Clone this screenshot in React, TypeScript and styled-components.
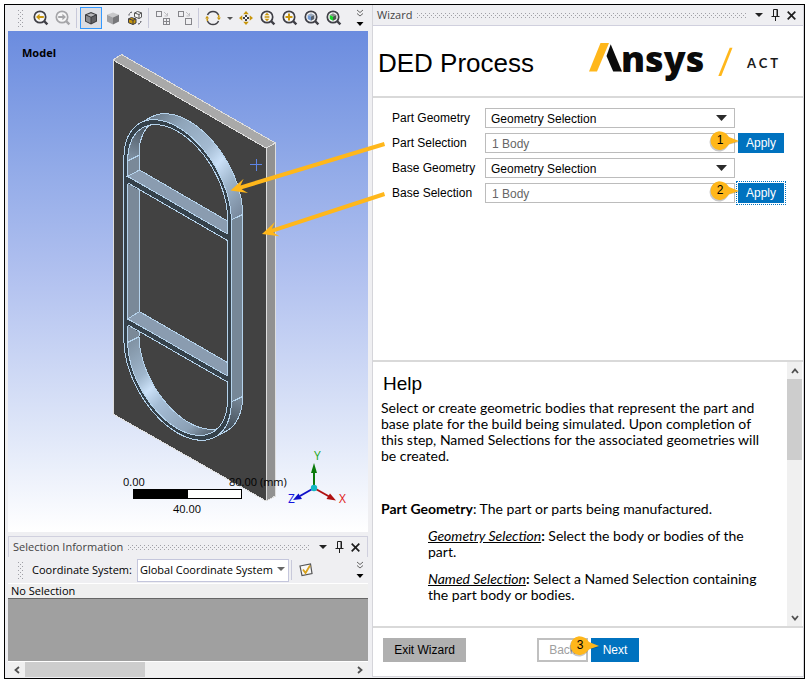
import React from 'react';
import styled, { createGlobalStyle } from 'styled-components';

const GlobalStyle = createGlobalStyle`
  *, *::before, *::after { box-sizing: border-box; }
  body { margin: 0; background: #fff; font: 11px/16px "Open Sans", "Noto Sans", sans-serif; color: #000; }
  h1, h2, p { margin: 0; font-weight: 400; }
  button, select, input { font: inherit; color: inherit; margin: 0; border-radius: 0; }
  svg { display: block; flex: none; }
`;

const ARIAL = '"Liberation Sans", Arial, sans-serif';
const GOLD = '#ffb71b';

/* ---------- shell ---------- */

const Page = styled.div`
  min-height: 100vh;
  display: flex;
  padding: 4px 3px 5px 4px;
`;

const Frame = styled.main`
  flex: 1;
  min-width: 0;
  display: grid;
  grid-template-columns: minmax(0, 360fr) minmax(0, 432fr);
  gap: 4px;
  padding: 0 0 1px 3px;
  border: 1px solid #000;
  background: #efeff2;
`;

const Column = styled.section`
  min-width: 0;
  display: flex;
  flex-direction: column;
`;

const WizardColumn = styled(Column)`
  border: 1px solid #d5d5da;
  border-top: 0;
  background: #fff;
`;

/* ---------- toolbar ---------- */

const Toolbar = styled.div`
  display: flex;
  align-items: center;
  height: 26px;
`;

const ToolButton = styled.button<{ $active?: boolean; $narrow?: boolean }>`
  width: ${p => (p.$narrow ? 11 : 22)}px;
  height: 22px;
  padding: 0;
  display: flex;
  align-items: center;
  justify-content: center;
  border: 1px solid ${p => (p.$active ? '#3399ff' : 'transparent')};
  background: ${p => (p.$active ? '#dcdde2' : 'transparent')};
`;

const Divider = styled.span`
  width: 1px;
  height: 20px;
  margin: 0 3px 0 2px;
  background: #c8c9da;
`;

const dots = (color: string) => `
  background-image:
    conic-gradient(at 1px 1px, transparent 75%, ${color} 0),
    conic-gradient(at 1px 1px, transparent 75%, ${color} 0);
  background-size: 4px 4px;
  background-position: 0 0, 2px 2px;
`;

const Grip = styled.span`
  width: 5px;
  height: 17px;
  margin: 0 7px 0 10px;
  ${dots('#a0a0a6')}
`;

const Spacer = styled.span`
  flex: 1;
`;

const OverflowButton = styled(ToolButton)`
  width: 17px;
`;

/* ---------- panel header ---------- */

const HeaderBar = styled.header`
  display: flex;
  align-items: center;
  height: 21px;
  padding: 0 4px;
  gap: 5px;
  border: 1px solid #d0d0de;
  border-width: 0 0 1px;
  background: #efeff2;
  color: #444;
`;

const SelectionHeader = styled(HeaderBar)`
  border-width: 1px 1px 0;
`;

const HeaderTitle = styled.h2`
  font-size: 11px;
  line-height: 18px;
  white-space: nowrap;
`;

const HeaderDots = styled.span`
  flex: 1;
  height: 5px;
  ${dots('#a0a0a6')}
`;

const HeaderActions = styled.span`
  display: flex;
`;

const HeaderButton = styled.button`
  width: 16px;
  height: 16px;
  padding: 0;
  border: 0;
  background: none;
  display: flex;
  align-items: center;
  justify-content: center;
`;

/* ---------- viewport ---------- */

const Viewport = styled.div`
  position: relative;
  z-index: 1;
  flex: 1;
  min-height: 501px;
  background: linear-gradient(#6b8cdf, #8da7e7 24%, #b0c0ef 48%, #e2e9f9 82%, #fff);
`;

/* ---------- selection panel ---------- */

const SelectionPanel = styled.section`
  margin-top: 4px;
  display: flex;
  flex-direction: column;
`;

const CoordBar = styled(Toolbar)`
  height: 27px;
  border-bottom: 1px solid #fff;
`;

const CoordLabel = styled.label`
  padding: 0 5px 0 2px;
  white-space: nowrap;
`;

const SelectBox = styled.span<{ $coord?: boolean }>`
  position: relative;
  display: block;
  min-width: 0;
  width: ${p => (p.$coord ? '152px' : 'auto')};
  height: ${p => (p.$coord ? 23 : 20)}px;
  & > select {
    appearance: none;
    width: 100%;
    height: 100%;
    padding: ${p => (p.$coord ? '0 14px 0 2px' : '0 20px 0 5px')};
    border: 1px solid ${p => (p.$coord ? '#c4c6dc' : '#bcbcbc')};
    background: #fff;
    outline: 0;
  }
  & > svg {
    position: absolute;
    right: ${p => (p.$coord ? 4 : 8)}px;
    top: 50%;
    margin-top: -3px;
    pointer-events: none;
  }
`;

const SelectionStatus = styled.p`
  padding-left: 3px;
  line-height: 14px;
  border-bottom: 1px solid #666;
  background: #efefef;
`;

const SelectionBody = styled.div`
  height: 62px;
  background: #a0a0a0;
`;

const HScroll = styled.div`
  display: flex;
  height: 16px;
  border-top: 1px solid #fff;
  background: #f0f0f0;
`;

const ScrollButton = styled.button`
  width: 17px;
  height: 15px;
  padding: 0;
  border: 0;
  background: none;
  display: flex;
  align-items: center;
  justify-content: center;
`;

const HThumb = styled.span`
  width: 120px;
  background: #cdcdcd;
`;

/* ---------- wizard ---------- */

const TitleBar = styled.div`
  display: flex;
  align-items: center;
  justify-content: space-between;
  height: 72px;
  padding: 0 21px 0 5px;
  border-bottom: 2px solid #d9d9d9;
`;

const Title = styled.h1`
  font: 26px/36px ${ARIAL};
  white-space: nowrap;
  padding-top: 4px;
`;

const Form = styled.form`
  flex: 1;
  display: grid;
  grid-template-columns: 93px minmax(0, 250px) 49px;
  grid-auto-rows: 20px;
  row-gap: 5px;
  padding: 10px 16px 20px 19px;
  font: 12px/20px ${ARIAL};
`;

const FieldLabel = styled.label`
  white-space: nowrap;
`;

const FieldCell = styled.div`
  position: relative;
`;

const TextField = styled.input`
  display: block;
  width: 100%;
  height: 20px;
  padding: 1px 6px 0;
  border: 1px solid #bcbcbc;
  background: #fff;
  color: #666;
`;

const ApplyButton = styled.button<{ $focused?: boolean }>`
  margin-left: 3px;
  width: 46px;
  height: 20px;
  padding: 0;
  border: 0;
  background: #0072bf;
  color: #fff;
  outline: ${p => (p.$focused ? '1px dotted #0072bf' : '0')};
  outline-offset: 1px;
`;

const Callout = styled.span<{ $top: number; $right: number }>`
  position: absolute;
  z-index: 2;
  top: ${p => p.$top}px;
  right: ${p => p.$right}px;
  width: 30px;
  height: 20px;
  font: 12px/19px ${ARIAL};
  color: #000;
  & > svg { position: absolute; inset: 0; overflow: visible; }
  & > b { position: relative; display: block; width: 22px; text-align: center; font-weight: 400; }
`;

const HelpPane = styled.section`
  display: flex;
  border-top: 2px solid #d9d9d9;
`;

const HelpText = styled.article`
  flex: 1;
  min-width: 0;
  min-height: 264px;
  padding: 10px 14px 20px 8px;
  font: 14px/16px Lato, "Open Sans", sans-serif;
`;

const HelpHeading = styled.h2`
  font: 19px/24px ${ARIAL};
  padding-left: 2px;
  margin-bottom: 4px;
`;

const HelpPara = styled.p<{ $indent?: boolean; $gap?: number }>`
  margin: ${p => p.$gap || 0}px 0 0 ${p => (p.$indent ? 47 : 0)}px;
`;

const Term = styled.em`
  text-decoration: underline;
`;

const VScroll = styled.div`
  width: 16px;
  display: flex;
  flex-direction: column;
  align-items: stretch;
  border-right: 1px solid #fff;
  background: #f0f0f0;
`;

const VScrollButton = styled(ScrollButton)`
  width: 15px;
  height: 17px;
`;

const VThumb = styled.span`
  height: 81px;
  background: #cdcdcd;
`;

const Footer = styled.footer`
  display: flex;
  align-items: flex-start;
  padding: 10px;
  height: 50px;
  border-top: 2px solid #d9d9d9;
  font: 12px/20px ${ARIAL};
`;

const FooterGroup = styled.div`
  display: flex;
  gap: 3px;
  margin-left: 71px;
`;

const FooterCell = styled.span`
  position: relative;
`;

const FooterButton = styled.button<{ $kind: 'exit' | 'back' | 'next' }>`
  display: block;
  height: 24px;
  padding: 0;
  width: ${p => ({ exit: 83, back: 51, next: 48 })[p.$kind]}px;
  border: ${p => (p.$kind === 'back' ? '2px solid #c0c0c0' : '0')};
  background: ${p => ({ exit: '#b0b0b0', back: '#fff', next: '#0072bf' })[p.$kind]};
  color: ${p => ({ exit: '#000', back: '#a0a0a0', next: '#fff' })[p.$kind]};
`;

/* ---------- icons ---------- */

const INK = '#3f3f46';
const AMBER = '#c8960c';

const Lens = ({ faded, children }: { faded?: boolean; children?: React.ReactNode }) => (
  <svg width="16" height="16" viewBox="0 0 16 16" fill="none">
    <circle cx="7" cy="7" r="5.700" stroke={faded ? '#a5a5a8' : INK} strokeWidth="1.700" fill="#f7f7f8" />
    <path d="M11 11l3.400 3.400" stroke={faded ? '#a5a5a8' : INK} strokeWidth="2.400" />
    {children}
  </svg>
);

const ArrowLeftIcon = () => <Lens><path d="M3 7l3.600-3.300V6H10.800v2H6.600v2.300z" fill={AMBER} /></Lens>;
const ArrowRightIcon = () => <Lens faded><path d="M11 7L7.400 3.700V6H3.200v2h4.200v2.300z" fill="#a5a5a8" /></Lens>;
const ZoomIcon = () => (
  <Lens><path d="M7 2.800l2.400 2.400H4.600zM7 11.200l2.400-2.400H4.600zM4.600 6h4.800v.8H4.600zM4.600 7.300h4.800v.8H4.600z" fill={AMBER} /></Lens>
);
const ZoomBoxIcon = () => <Lens><path d="M6 3.500h2V6h2.500v2H8v2.500H6V8H3.500V6H6z" fill={AMBER} /></Lens>;
const SmallCube = ({ top, left, right }: { top: string; left: string; right: string }) => (
  <>
    <path d="M7 3.300l3.300 1.600L7 6.500 3.700 4.900z" fill={top} />
    <path d="M3.700 4.900L7 6.500v4.200L3.700 9z" fill={left} />
    <path d="M10.300 4.900L7 6.500v4.200L10.300 9z" fill={right} />
  </>
);
const FitIcon = () => <Lens><SmallCube top="#9aa9bd" left="#6f9ad6" right="#55606e" /></Lens>;
const FitSelectIcon = () => <Lens><SmallCube top="#8a8a8a" left="#17d52a" right="#4c5a4e" /></Lens>;

const CubeEdgesIcon = () => (
  <svg width="16" height="16" viewBox="0 0 16 16">
    <path d="M8 2l6 2.500v7L8 14.500 2 11.500v-7z" fill="#3a3a3d" />
    <path d="M8 3.200l4.300 1.600L8 6.700 3.700 4.800z" fill="#b5b5b8" />
    <path d="M3 5.600l4.500 2v5.600L3 10.900z" fill="#8a8a8e" />
    <path d="M13 5.600l-4.500 2v5.600l4.500-2.300z" fill="#5e5e62" />
  </svg>
);
const CubeIcon = () => (
  <svg width="16" height="16" viewBox="0 0 16 16">
    <path d="M8 2.500l6 2.300-6 2.700-6-2.700z" fill="#c9c9cb" />
    <path d="M2 4.800l6 2.700v7l-6-3z" fill="#a0a0a3" />
    <path d="M14 4.800L8 7.500v7l6-3z" fill="#77777a" />
  </svg>
);
const CubesIcon = () => (
  <svg width="16" height="16" viewBox="0 0 16 16">
    <path d="M7.500 3l3-1.500 4 1.300v4.400l-2.500 1.300-4.500-1.700z" fill="#f7f7f8" stroke="#555" />
    <path d="M7.500 3L12 4.500v4M12 4.500l2.500-1.500" fill="none" stroke="#555" />
    <path d="M1.500 8.800l3-1.300 4.500 1.500v4L6 14.500l-4.500-1.800z" fill={AMBER} stroke={INK} />
    <path d="M1.500 8.800L6 10.300 9 9M6 10.300v4.200" fill="none" stroke={INK} />
    <path d="M2 5.500C2 3.500 3 2.300 5.500 2M11 14c1.800 0 2.800-1 3-3" fill="none" stroke={INK} strokeDasharray="2 1" />
  </svg>
);
const BoxesIcon = ({ grid }: { grid?: boolean }) => (
  <svg width="16" height="16" viewBox="0 0 16 16" fill="none" stroke="#85858a">
    <rect x="1.500" y="1.500" width="5" height="5" />
    <rect x="8.500" y="8.500" width="6" height="6" />
    {grid && <path d="M11.500 8.500v6M8.500 11.500h6" />}
    <path d="M9 2l3.500 3.500M12.500 3v3h-3" stroke="#bfbfc3" />
  </svg>
);
const RotateIcon = () => (
  <svg width="16" height="16" viewBox="0 0 16 16" fill="none" strokeWidth="1.500">
    <path d="M2.500 5A6 6 0 0 1 13.500 5M13.500 11A6 6 0 0 1 2.500 11" stroke={INK} />
    <path d="M13.500 5l.5 2.500M2.500 11L2 8.500" stroke={AMBER} />
    <path d="M11.800 7.500h4L14 10.300zM.2 8.500h4L2 5.700z" fill={AMBER} />
  </svg>
);
const PanIcon = () => (
  <svg width="16" height="16" viewBox="0 0 16 16" fill={AMBER}>
    <path d="M8 1l2.800 3.300H5.200zM8 15l2.800-3.300H5.200zM1 8l3.300-2.800v5.600zM15 8l-3.300-2.800v5.600z" />
    <path d="M7 5h2v2H7zM7 9h2v2H7zM5 7h2v2H5zM9 7h2v2H9z" fill={INK} />
    <path d="M7 7h2v2H7z" fill="#fff" />
  </svg>
);
const Caret = ({ w = 7, h = 4, color = '#222' }: { w?: number; h?: number; color?: string }) => (
  <svg width={w} height={h} viewBox="0 0 8 4" preserveAspectRatio="none"><path d="M0 0h8L4 4z" fill={color} /></svg>
);
const OverflowIcon = () => (
  <svg width="8" height="18" viewBox="0 0 8 18" fill="none" stroke="#666">
    <path d="M1 1l3 2.500L7 1M1 4.500L4 7l3-2.500" />
    <path d="M.5 13h7L4 17z" fill="#000" stroke="none" />
  </svg>
);
const PinIcon = () => (
  <svg width="9" height="12" viewBox="0 0 9 12" fill="none" stroke="#1e1e1e">
    <path d="M2.500 7V.5h4V7M.5 7.500h8M4.500 7.500V12" /><path d="M6 1v6" />
  </svg>
);
const CloseIcon = () => (
  <svg width="9" height="9" viewBox="0 0 9 9" stroke="#1e1e1e" strokeWidth="1.700"><path d="M.7.7l7.600 7.600M8.300.7L.7 8.300" /></svg>
);
const CheckNoteIcon = () => (
  <svg width="16" height="16" viewBox="0 0 16 16" fill="none">
    <path d="M2 4l10.500-2 1.500 9.500-10 2z" fill="#f7f7f8" stroke="#555" strokeWidth="1.200" />
    <path d="M5 7.500l2.500 3.500L12 3.500" stroke="#d9a21b" strokeWidth="1.800" />
  </svg>
);
const Chevron = ({ d }: { d: string }) => (
  <svg width="8" height="8" viewBox="0 0 8 8" fill="none" stroke="#505050" strokeWidth="1.800"><path d={d} /></svg>
);

const Logo = () => (
  <svg width="194" height="42" viewBox="588 40 194 42" overflow="visible" role="img" aria-label="Ansys ACT">
    <path d="M589 71.500L600.500 43H609L597 71.500z" fill={GOLD} />
    <path d="M610.700 44.300L622 71.500H613.200L606.500 56z" fill="#0b0b0b" />
    <text x="621" y="72" fontFamily="Open Sans, Noto Sans, sans-serif" fontWeight="800" fontSize="36" fill="#0b0b0b">nsys</text>
    <path d="M718.300 76L729.700 47.700H732.500L721.300 76z" fill={GOLD} />
    <text x="747" y="68" fontFamily="Lato, sans-serif" fontWeight="700" fontSize="13" letterSpacing="3" fill="#1a1a1a">ACT</text>
  </svg>
);

const StepCallout = ({ n, top, right }: { n: number; top: number; right: number }) => (
  <Callout $top={top} $right={right}>
    <svg width="30" height="20" viewBox="0 0 30 20">
      <path d="M10 1.500C15 1.500 18 4.500 20 6.500L30 11l-10 2.500C17 18 14.500 20.500 10 20.500a9.500 9.500 0 0 1 0-19z" fill="#000" opacity=".22" />
      <path d="M10 .3C14.500 .3 17.500 2.500 20 6l10 4-10 3.200c-2.500 3.300-5.500 5.800-10 5.800a9.400 9.400 0 0 1 0-18.700z" fill={GOLD} />
    </svg>
    <b>{n}</b>
  </Callout>
);

/* ---------- 3D scene ---------- */

type Pt = [number, number];
const BACK: Pt = [11.3, -6];
const TOP_V = 0;
const BOTTOM_V = 182;

/* Isometric projection of the plate's front plane. */
const project = (u: number, v: number, o: Pt = [0, 0]): Pt => [177.6 + 0.866 * u + o[0], 189 + 0.5 * u + v + o[1]];

const arc = (r: number, v: number, from: number, to: number, o?: Pt): Pt[] =>
  Array.from({ length: 41 }, (_, i) => {
    const t = ((from + ((to - from) * i) / 40) * Math.PI) / 180;
    return project(r * Math.cos(t), v - r * Math.sin(t), o);
  });

const line = (pts: Pt[]) => 'M' + pts.map(([x, y]) => `${x.toFixed(1)} ${y.toFixed(1)}`).join('L') + 'Z';

const loop = (r: number, o?: Pt) => line([...arc(r, TOP_V, 180, 0, o), ...arc(r, BOTTOM_V, 0, -180, o)]);

const R_OUT = 62;
const R_IN = 57.6;
const TANGENT = 133.8;

const topSide = line([...arc(R_OUT, TOP_V, TANGENT, 0, BACK), ...arc(R_OUT, TOP_V, 0, TANGENT)]);
const bottomSide = line([...arc(R_OUT, BOTTOM_V, 0, TANGENT - 180, BACK), ...arc(R_OUT, BOTTOM_V, TANGENT - 180, 0)]);

const EDGE = '#b5d3ec';

const Arrow = ({ x1, y1, x2, y2 }: { x1: number; y1: number; x2: number; y2: number }) => {
  const a = (Math.atan2(y2 - y1, x2 - x1) * 180) / Math.PI;
  const len = Math.hypot(x2 - x1, y2 - y1);
  return (
    <path
      transform={`translate(${x1} ${y1}) rotate(${a})`}
      fill={GOLD}
      d={`M0-2H${len - 11}L${len - 16}-7.500L${len} 0L${len - 16} 7.500L${len - 11} 2H0z`}
    />
  );
};

const Scene = () => (
  <svg width="360" height="501" viewBox="8 31 360 501" overflow="visible" fontFamily="Open Sans, Noto Sans, sans-serif" fontSize="11">
    <defs>
      <linearGradient id="topOuter" gradientUnits="userSpaceOnUse" x1="145" y1="110" x2="252" y2="205">
        <stop offset="0" stopColor="#5d6b78" /><stop offset=".25" stopColor="#8fa5ba" />
        <stop offset=".5" stopColor="#a3bad1" /><stop offset=".63" stopColor="#cbe1f8" />
        <stop offset=".78" stopColor="#9db4ca" /><stop offset="1" stopColor="#76869a" />
      </linearGradient>
      <linearGradient id="topInner" gradientUnits="userSpaceOnUse" x1="130" y1="162" x2="145" y2="124">
        <stop offset="0" stopColor="#8496a8" /><stop offset="1" stopColor="#46525d" />
      </linearGradient>
      <linearGradient id="bottomInner" gradientUnits="userSpaceOnUse" x1="118" y1="345" x2="205" y2="440">
        <stop offset="0" stopColor="#7a8b9b" /><stop offset=".3" stopColor="#9fb6cc" />
        <stop offset=".42" stopColor="#cbe1f8" /><stop offset=".55" stopColor="#a5bdd5" />
        <stop offset=".85" stopColor="#8ba0b5" /><stop offset="1" stopColor="#56636f" />
      </linearGradient>
      <linearGradient id="bottomOuter" gradientUnits="userSpaceOnUse" x1="240" y1="398" x2="228" y2="432">
        <stop offset="0" stopColor="#788898" /><stop offset="1" stopColor="#3d4852" />
      </linearGradient>
      <clipPath id="hole"><path d={loop(R_IN)} /></clipPath>
    </defs>

    <g shapeRendering="crispEdges">
      <path d="M113 60L121.500 54.500 275.500 143 266 148z" fill="#a9a9a9" />
      <path d="M266 148L275.500 143V496L266 501z" fill="#919191" />
      <path d="M113 60L266 148V501L113 414z" fill="#424242" />
      <path d="M113 414V60L121.500 54.500 275.500 143V496L266 501L113 414M113 60L266 148L275.500 143M266 148V501" fill="none" stroke="#dedede" />

      <path d={topSide} fill="url(#topOuter)" stroke={EDGE} />
      <path d={bottomSide} fill="url(#bottomOuter)" stroke={EDGE} />
      <path d="M231.300 220L242.600 214.500V396.500L231.300 402z" fill="#768797" stroke={EDGE} />
      <path d={loop(R_OUT)} fill="#35414a" stroke={EDGE} />

      <g clipPath="url(#hole)">
        <path d="M120 90H235V210L120 165z" fill="url(#topInner)" />
        <path d="M120 164L142 154V336L120 346z" fill="#7a8998" />
        <path d="M120 346L142 335H235V450H120z" fill="url(#bottomInner)" />
        <path d={loop(R_IN, BACK)} fill="#424242" stroke={EDGE} />
        <path d="M127.500 161L139.500 155M127.500 342.500L139.500 336.500" stroke={EDGE} />
      </g>
      <path d={loop(R_IN)} fill="none" stroke={EDGE} />
      <path d="M127.500 176.500L139.500 170 227.500 221V234z" fill="#8a9cb0" stroke={EDGE} />
      <path d="M126.500 176.500L228.500 234V240.500L126.500 183z" fill="#35414a" />
      <path d="M128 176.500L227.500 234M128 183L227.500 240.500" stroke={EDGE} />
      <path d="M127.500 319L139.500 311.600 227.500 362.500V376z" fill="#8a9cb0" stroke={EDGE} />
      <path d="M126.500 319L228.500 376V382L126.500 325z" fill="#35414a" />
      <path d="M128 319L227.500 376M128 325L227.500 382" stroke={EDGE} />

      <path d="M250 164.500H262M256.500 159V171" stroke="#5d84e6" />
      <rect x="133.500" y="489.500" width="108" height="9" fill="#fff" stroke="#000" />
      <rect x="133" y="489" width="55" height="10" />
    </g>

    <text x="22" y="57" fontWeight="700">Model</text>
    <text x="123" y="486">0.00</text>
    <text x="229" y="486">80.00 (mm)</text>
    <text x="173" y="513">40.00</text>

    <path d="M314 488V470" stroke="#0a7a0a" strokeWidth="2" />
    <path d="M314 463L317 473H311z" fill="#0a7a0a" />
    <path d="M314 488L330 497" stroke="#b01010" strokeWidth="2" />
    <path d="M336 500.500L326.500 499L330 493.500z" fill="#b01010" />
    <path d="M314 488L300 496" stroke="#1010c8" strokeWidth="2" />
    <path d="M293 500L298.500 493.500 302 499z" fill="#1010c8" />
    <circle cx="314" cy="488" r="3.200" fill="#12b8c4" />
    <g fontSize="12">
      <text x="314" y="460" fill="#1ba81b">Y</text>
      <text x="339" y="503" fill="#e01818">X</text>
      <text x="288" y="503" fill="#1515e0">Z</text>
    </g>

    <Arrow x1={384.5} y1={144} x2={230.5} y2={190.5} />
    <Arrow x1={384.5} y1={194} x2={262} y2={234} />
  </svg>
);

/* ---------- pieces ---------- */

const Actions = ({ panel }: { panel: string }) => (
  <HeaderActions>
    <HeaderButton aria-label={`${panel} options`}><Caret w={8} /></HeaderButton>
    <HeaderButton aria-label={`Pin ${panel}`}><PinIcon /></HeaderButton>
    <HeaderButton aria-label={`Close ${panel}`}><CloseIcon /></HeaderButton>
  </HeaderActions>
);

const GeometryRow = ({ id, label }: { id: string; label: string }) => (
  <>
    <FieldLabel htmlFor={id}>{label}</FieldLabel>
    <SelectBox>
      <select id={id}><option>Geometry Selection</option></select>
      <Caret w={11} h={6} color="#2b2b2b" />
    </SelectBox>
    <span />
  </>
);

const BodyRow = ({ id, label, step, focused }: { id: string; label: string; step: number; focused?: boolean }) => (
  <>
    <FieldLabel htmlFor={id}>{label}</FieldLabel>
    <FieldCell>
      <TextField id={id} defaultValue="1 Body" />
      <StepCallout n={step} top={-2} right={-4} />
    </FieldCell>
    <ApplyButton type="button" $focused={focused}>Apply</ApplyButton>
  </>
);

export default function App() {
  return (
    <Page>
      <GlobalStyle />
      <Frame>
        <Column>
          <Toolbar role="toolbar" aria-label="Graphics">
            <Grip />
            <ToolButton aria-label="Previous view"><ArrowLeftIcon /></ToolButton>
            <ToolButton aria-label="Next view"><ArrowRightIcon /></ToolButton>
            <Divider />
            <ToolButton $active aria-label="Shaded with edges"><CubeEdgesIcon /></ToolButton>
            <ToolButton aria-label="Shaded"><CubeIcon /></ToolButton>
            <ToolButton aria-label="Rescale"><CubesIcon /></ToolButton>
            <Divider />
            <ToolButton aria-label="Expand all"><BoxesIcon grid /></ToolButton>
            <ToolButton aria-label="Expand one"><BoxesIcon /></ToolButton>
            <Divider />
            <ToolButton aria-label="Rotate"><RotateIcon /></ToolButton>
            <ToolButton $narrow aria-label="Rotate options"><Caret w={6} h={3} color="#555" /></ToolButton>
            <ToolButton aria-label="Pan"><PanIcon /></ToolButton>
            <ToolButton aria-label="Zoom"><ZoomIcon /></ToolButton>
            <ToolButton aria-label="Box zoom"><ZoomBoxIcon /></ToolButton>
            <ToolButton aria-label="Zoom to fit"><FitIcon /></ToolButton>
            <ToolButton aria-label="Zoom to selection"><FitSelectIcon /></ToolButton>
            <Spacer />
            <OverflowButton aria-label="More tools"><OverflowIcon /></OverflowButton>
          </Toolbar>

          <Viewport><Scene /></Viewport>

          <SelectionPanel>
            <SelectionHeader>
              <HeaderTitle>Selection Information</HeaderTitle>
              <HeaderDots />
              <Actions panel="Selection Information" />
            </SelectionHeader>
            <CoordBar>
              <Grip />
              <CoordLabel htmlFor="coord">Coordinate System:</CoordLabel>
              <SelectBox $coord>
                <select id="coord"><option>Global Coordinate System</option></select>
                <Caret w={8} color="#666" />
              </SelectBox>
              <Divider />
              <ToolButton aria-label="Selection settings"><CheckNoteIcon /></ToolButton>
              <Spacer />
              <OverflowButton aria-label="More options"><OverflowIcon /></OverflowButton>
            </CoordBar>
            <SelectionStatus>No Selection</SelectionStatus>
            <SelectionBody />
            <HScroll>
              <ScrollButton aria-label="Scroll left"><Chevron d="M6 1L2.500 4 6 7" /></ScrollButton>
              <HThumb />
              <Spacer />
              <ScrollButton aria-label="Scroll right"><Chevron d="M2 1l3.500 3L2 7" /></ScrollButton>
            </HScroll>
          </SelectionPanel>
        </Column>

        <WizardColumn>
          <HeaderBar>
            <HeaderTitle>Wizard</HeaderTitle>
            <HeaderDots />
            <Actions panel="Wizard" />
          </HeaderBar>
          <TitleBar>
            <Title>DED Process</Title>
            <Logo />
          </TitleBar>
          <Form>
            <GeometryRow id="part-geometry" label="Part Geometry" />
            <BodyRow id="part-selection" label="Part Selection" step={1} />
            <GeometryRow id="base-geometry" label="Base Geometry" />
            <BodyRow id="base-selection" label="Base Selection" step={2} focused />
          </Form>
          <HelpPane>
            <HelpText>
              <HelpHeading>Help</HelpHeading>
              <HelpPara>
                Select or create geometric bodies that represent the part and base plate for the build being
                simulated. Upon completion of this step, Named Selections for the associated geometries will be
                created.
              </HelpPara>
              <HelpPara $gap={37}><b>Part Geometry</b>: The part or parts being manufactured.</HelpPara>
              <HelpPara $indent $gap={11}>
                <Term>Geometry Selection</Term><b>:</b> Select the body or bodies of the part.
              </HelpPara>
              <HelpPara $indent $gap={11}>
                <Term>Named Selection</Term><b>:</b> Select a Named Selection containing the part body or bodies.
              </HelpPara>
            </HelpText>
            <VScroll>
              <VScrollButton aria-label="Scroll up"><Chevron d="M1 6l3-3.500L7 6" /></VScrollButton>
              <VThumb />
              <Spacer />
              <VScrollButton aria-label="Scroll down"><Chevron d="M1 2l3 3.500L7 2" /></VScrollButton>
            </VScroll>
          </HelpPane>
          <Footer>
            <FooterButton $kind="exit">Exit Wizard</FooterButton>
            <FooterGroup>
              <FooterCell>
                <FooterButton $kind="back">Back</FooterButton>
                <StepCallout n={3} top={-2} right={-11} />
              </FooterCell>
              <FooterButton $kind="next">Next</FooterButton>
            </FooterGroup>
          </Footer>
        </WizardColumn>
      </Frame>
    </Page>
  );
}
